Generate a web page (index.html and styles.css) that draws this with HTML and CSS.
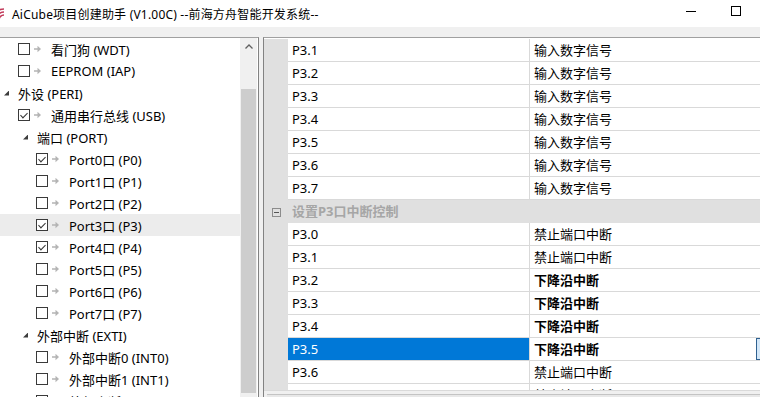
FILE: index.html
```html
<!DOCTYPE html>
<html lang="zh-CN">
<head>
    <meta charset="UTF-8">
    <title>AiCube项目创建助手</title>
    <link rel="stylesheet" href="styles.css">
</head>
<body>
    <div class="titlebar">
        <svg class="app-icon" viewBox="0 0 16 16">
            <path d="M3 14a11 11 0 0 1 11-11M6 14a8 8 0 0 1 8-8M9 14a5 5 0 0 1 5-5" fill="none" stroke="#c23a5a" stroke-width="1.6"/>
        </svg>
        <span class="title">AiCube项目创建助手 (V1.00C) --前海方舟智能开发系统--</span>
        <div class="win-btns">
            <div class="win-btn"><span class="min-glyph"></span></div>
            <div class="win-btn"><span class="max-glyph"></span></div>
        </div>
    </div>

    <div class="main">
        <div class="tree">
            <div class="tree-rows">
                <div class="row lv1"><span class="cb"></span><span class="arr"></span><span class="label">看门狗 (WDT)</span></div>
                <div class="row lv1"><span class="cb"></span><span class="arr"></span><span class="label">EEPROM (IAP)</span></div>
                <div class="row ex0"><span class="tri"></span><span class="label">外设 (PERI)</span></div>
                <div class="row lv1"><span class="cb on"></span><span class="arr"></span><span class="label">通用串行总线 (USB)</span></div>
                <div class="row ex1"><span class="tri"></span><span class="label">端口 (PORT)</span></div>
                <div class="row lv2"><span class="cb on"></span><span class="arr"></span><span class="label">Port0口 (P0)</span></div>
                <div class="row lv2"><span class="cb"></span><span class="arr"></span><span class="label">Port1口 (P1)</span></div>
                <div class="row lv2"><span class="cb"></span><span class="arr"></span><span class="label">Port2口 (P2)</span></div>
                <div class="row lv2 hover"><span class="cb on"></span><span class="arr"></span><span class="label">Port3口 (P3)</span></div>
                <div class="row lv2"><span class="cb on"></span><span class="arr"></span><span class="label">Port4口 (P4)</span></div>
                <div class="row lv2"><span class="cb"></span><span class="arr"></span><span class="label">Port5口 (P5)</span></div>
                <div class="row lv2"><span class="cb"></span><span class="arr"></span><span class="label">Port6口 (P6)</span></div>
                <div class="row lv2"><span class="cb"></span><span class="arr"></span><span class="label">Port7口 (P7)</span></div>
                <div class="row ex1"><span class="tri"></span><span class="label">外部中断 (EXTI)</span></div>
                <div class="row lv2"><span class="cb"></span><span class="arr"></span><span class="label">外部中断0 (INT0)</span></div>
                <div class="row lv2"><span class="cb"></span><span class="arr"></span><span class="label">外部中断1 (INT1)</span></div>
                <div class="row lv2"><span class="cb"></span><span class="arr"></span><span class="label">外部中断2 (INT2)</span></div>
            </div>
            <div class="vscroll">
                <div class="up">
                    <svg width="8" height="5" viewBox="0 0 8 5"><path d="M0.5 4.5L4 1l3.5 3.5" fill="none" stroke="#606060" stroke-width="1.3"/></svg>
                </div>
                <div class="thumb"></div>
            </div>
        </div>

        <div class="grid">
            <div class="grid-rows">
                <div class="prow"><div class="gutter"></div><div class="pname">P3.1</div><div class="pval">输入数字信号</div></div>
                <div class="prow"><div class="gutter"></div><div class="pname">P3.2</div><div class="pval">输入数字信号</div></div>
                <div class="prow"><div class="gutter"></div><div class="pname">P3.3</div><div class="pval">输入数字信号</div></div>
                <div class="prow"><div class="gutter"></div><div class="pname">P3.4</div><div class="pval">输入数字信号</div></div>
                <div class="prow"><div class="gutter"></div><div class="pname">P3.5</div><div class="pval">输入数字信号</div></div>
                <div class="prow"><div class="gutter"></div><div class="pname">P3.6</div><div class="pval">输入数字信号</div></div>
                <div class="prow"><div class="gutter"></div><div class="pname">P3.7</div><div class="pval">输入数字信号</div></div>
                <div class="prow group"><div class="gutter"><span class="toggle"></span></div><div class="gname">设置P3口中断控制</div></div>
                <div class="prow"><div class="gutter"></div><div class="pname">P3.0</div><div class="pval">禁止端口中断</div></div>
                <div class="prow"><div class="gutter"></div><div class="pname">P3.1</div><div class="pval">禁止端口中断</div></div>
                <div class="prow"><div class="gutter"></div><div class="pname">P3.2</div><div class="pval bold">下降沿中断</div></div>
                <div class="prow"><div class="gutter"></div><div class="pname">P3.3</div><div class="pval bold">下降沿中断</div></div>
                <div class="prow"><div class="gutter"></div><div class="pname">P3.4</div><div class="pval bold">下降沿中断</div></div>
                <div class="prow"><div class="gutter"></div><div class="pname sel">P3.5</div><div class="pval bold">下降沿中断<span class="dd"></span></div></div>
                <div class="prow"><div class="gutter"></div><div class="pname">P3.6</div><div class="pval">禁止端口中断</div></div>
                <div class="prow"><div class="gutter"></div><div class="pname">P3.7</div><div class="pval">禁止端口中断</div></div>
            </div>
            <div class="hscroll"><div class="hthumb"></div></div>
        </div>
    </div>
</body>
</html>
```

FILE: styles.css
```css
html, body {
    overflow: hidden;
}
body {
    margin: 0;
    width: 760px;
    height: 397px;
    background-color: #f0f0f0;
    font-family: "Noto Sans", "Noto Sans CJK SC", sans-serif;
    font-size: 13px;
    color: #000;
}

/* title bar */
.titlebar {
    height: 27px;
    background-color: #fff;
    display: flex;
    align-items: center;
    font-size: 12px;
    margin-bottom: 10px;
}
.app-icon {
    width: 16px;
    height: 16px;
    margin-left: -10px;
    flex-shrink: 0;
}
.title {
    margin-left: 6px;
    white-space: nowrap;
    letter-spacing: 0.2px;
}
.win-btns {
    margin-left: auto;
    display: flex;
}
.win-btn {
    width: 46px;
    height: 27px;
    display: flex;
    align-items: center;
    justify-content: center;
}
.min-glyph {
    width: 10px;
    height: 1px;
    background-color: #000;
    margin-top: -4px;
}
.max-glyph {
    width: 10px;
    height: 10px;
    border: 1px solid #000;
    box-sizing: border-box;
    margin-top: -5px;
    margin-left: -2px;
}

/* panels */
.main {
    display: flex;
    gap: 4px;
    width: 777px;
    height: 377px;
}
.tree {
    width: 258px;
    flex-shrink: 0;
    display: flex;
    background-color: #fff;
    border-top: 1px solid #a0a0a0;
    border-right: 1px solid #828282;
}
.tree-rows {
    width: 240px;
    flex-shrink: 0;
}
.row {
    height: 22px;
    display: flex;
    align-items: center;
    white-space: nowrap;
}
.row.hover {
    background-color: #ececec;
}
.lv1 { padding-left: 18px; }
.lv2 { padding-left: 36px; }
.ex0 { padding-left: 4px; }
.ex1 { padding-left: 23px; }

.cb {
    width: 12px;
    height: 12px;
    box-sizing: border-box;
    border: 1px solid #3a3a3a;
    background-color: #fff;
    flex-shrink: 0;
    display: flex;
    justify-content: center;
}
.cb.on::after {
    content: "";
    width: 3px;
    height: 6px;
    margin-top: 1px;
    border: solid #333;
    border-width: 0 1px 1px 0;
    transform: rotate(45deg);
}
.arr {
    width: 7px;
    height: 7px;
    margin-left: 4px;
    background-color: #b4b4b4;
    clip-path: polygon(0 38%, 50% 38%, 50% 5%, 100% 50%, 50% 95%, 50% 62%, 0 62%);
    flex-shrink: 0;
}
.arr + .label {
    margin-left: 10px;
}
.tri {
    width: 5px;
    height: 5px;
    background-color: #3c3c3c;
    clip-path: polygon(100% 0, 100% 100%, 0 100%);
    margin-right: 9px;
    flex-shrink: 0;
}

.vscroll {
    width: 17px;
    margin-right: 1px;
    background-color: #f0f0f0;
    display: flex;
    flex-direction: column;
    align-items: center;
}
.vscroll .up {
    height: 17px;
    display: flex;
    align-items: center;
    justify-content: center;
}
.vscroll .thumb {
    width: 15px;
    height: 304px;
    margin-top: 34px;
    background-color: #cdcdcd;
}

/* property grid */
.grid {
    flex: 1;
    display: flex;
    flex-direction: column;
    background-color: #fff;
    border-top: 1px solid #a0a0a0;
    border-left: 1px solid #828282;
}
.grid-rows {
    height: 351px;
    padding-top: 1px;
    overflow: hidden;
}
.prow {
    display: flex;
    height: 23px;
    line-height: 22px;
}
.gutter {
    width: 24px;
    flex-shrink: 0;
    background-color: #e0e0e0;
    display: flex;
    align-items: center;
}
.pname {
    width: 237px;
    flex-shrink: 0;
    padding-left: 4px;
    border-bottom: 1px solid #d9d9d9;
}
.pname.sel {
    background-color: #0078d7;
    color: #fff;
}
.pval {
    flex: 1;
    display: flex;
    padding-left: 4px;
    border-left: 1px solid #d9d9d9;
    border-bottom: 1px solid #d9d9d9;
    white-space: nowrap;
}
.pval.bold {
    font-weight: bold;
}
.dd {
    margin-left: auto;
    width: 21px;
    height: 22px;
    box-sizing: border-box;
    border: 1px solid #2f6190;
    background-color: #d3e7f8;
}
.prow.group {
    background-color: #e0e0e0;
}
.toggle {
    width: 9px;
    height: 9px;
    margin-left: 8px;
    margin-top: 1px;
    box-sizing: border-box;
    border: 1px solid #8c8c8c;
    display: flex;
    align-items: center;
    justify-content: center;
}
.toggle::after {
    content: "";
    width: 5px;
    height: 1px;
    background-color: #555;
}
.gname {
    padding-left: 4px;
    font-weight: bold;
    color: #a6a6a6;
}
.hscroll {
    flex: 1;
    background-color: #f0f0f0;
    border-top: 1px solid #dadada;
}
.hthumb {
    margin: 3px 0 0 3px;
    height: 17px;
    border-top: 1px solid #c4c4c4;
    background-color: #e8e8e8;
}
```
